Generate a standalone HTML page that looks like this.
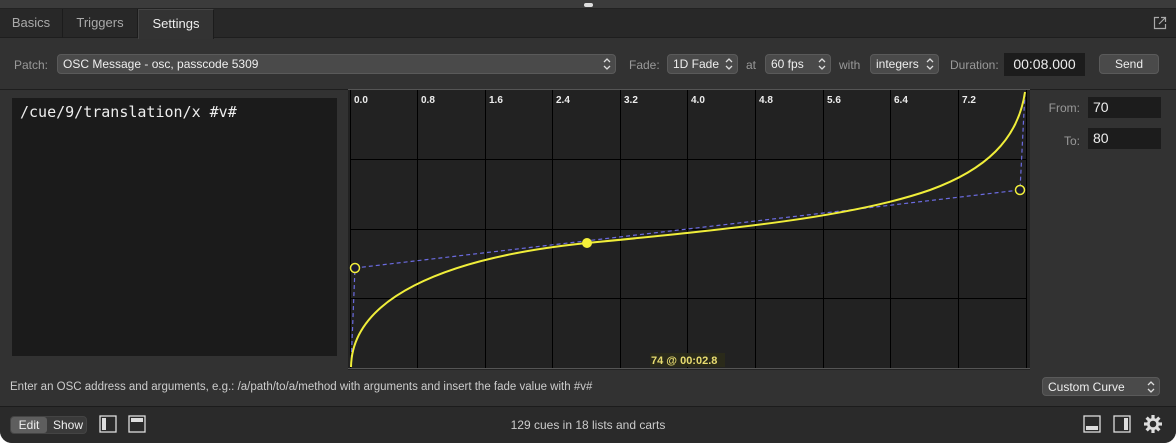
<!DOCTYPE html>
<html><head><style>
*{margin:0;padding:0;box-sizing:border-box}
body{width:1176px;height:443px;background:#fff;font-family:"Liberation Sans",sans-serif;font-size:12px;color:#ddd;position:relative;overflow:hidden}
.win{position:absolute;left:0;top:0;width:1176px;height:443px;background:#323232;border-radius:0 0 12px 12px;overflow:hidden}
.abs{position:absolute}
.top{left:0;top:0;width:1176px;height:9px;background:#3b3b3b;border-bottom:1px solid #222}
.tabbar{left:0;top:9px;width:1176px;height:29px;background:#282828;border-bottom:1px solid #1e1e1e}
.tab{position:absolute;top:0;height:29px;line-height:28px;text-align:center;font-size:13px;color:#aaa;border-right:1px solid #1c1c1c}
.lbl{color:#999;font-size:12px}
.pop{position:absolute;height:20px;background:#4a4a4a;border:1px solid #5a5a5a;border-radius:4px;color:#eee;font-size:12px;line-height:18px;padding-left:5px}
.pop svg{position:absolute;right:4px;top:2px}
.field{position:absolute;background:#1c1c1c;color:#eee;font-size:14px}
.btm{left:0;top:406px;width:1176px;height:37px;background:#2a2a2a;border-top:1px solid #1c1c1c}
</style></head><body><div class="win">
<div class="abs top"></div>
<div class="abs" style="left:584px;top:3px;width:9px;height:4px;border-radius:2px;background:#ddd"></div>
<div class="abs tabbar">
<div class="tab" style="left:0;width:63px">Basics</div>
<div class="tab" style="left:63px;width:75px">Triggers</div>
<div class="tab" style="left:138px;width:76px;background:#333;color:#eee;border-left:1px solid #444;border-top:1px solid #444;height:30px">Settings</div>
<svg class="abs" style="left:1153px;top:7px" width="14" height="14" viewBox="0 0 14 14" fill="none" stroke="#aaa" stroke-width="1.2"><path d="M6 1.5H1.5V12.5H12.5V8M8 1.5H12.5V6M12.5 1.5L6 8"/></svg>
</div>
<div class="abs lbl" style="left:14px;top:58px">Patch:</div>
<div class="pop" style="left:57px;top:54px;width:559px">OSC Message - osc, passcode 5309<svg width="8" height="14"><path d="M1 5L4 2L7 5M1 9L4 12L7 9" fill="none" stroke="#ddd" stroke-width="1.3"/></svg></div>
<div class="abs lbl" style="left:629px;top:58px">Fade:</div>
<div class="pop" style="left:667px;top:54px;width:71px">1D Fade<svg width="8" height="14"><path d="M1 5L4 2L7 5M1 9L4 12L7 9" fill="none" stroke="#ddd" stroke-width="1.3"/></svg></div>
<div class="abs lbl" style="left:746px;top:58px">at</div>
<div class="pop" style="left:765px;top:54px;width:66px">60 fps<svg width="8" height="14"><path d="M1 5L4 2L7 5M1 9L4 12L7 9" fill="none" stroke="#ddd" stroke-width="1.3"/></svg></div>
<div class="abs lbl" style="left:839px;top:58px">with</div>
<div class="pop" style="left:870px;top:54px;width:69px">integers<svg width="8" height="14"><path d="M1 5L4 2L7 5M1 9L4 12L7 9" fill="none" stroke="#ddd" stroke-width="1.3"/></svg></div>
<div class="abs lbl" style="left:950px;top:58px">Duration:</div>
<div class="field" style="left:1004px;top:53px;width:81px;height:23px;line-height:23px;text-align:center">00:08.000</div>
<div class="pop" style="left:1099px;top:54px;width:60px;text-align:center;padding:0">Send</div>
<div class="abs" style="left:0;top:89px;width:1176px;height:1px;background:#1e1e1e"></div>
<div class="field" style="left:12px;top:98px;width:325px;height:258px;background:#1b1b1b;font-family:'DejaVu Sans Mono','Liberation Mono',monospace;font-size:15px;padding:5px 8px">/cue/9/translation/x #v#</div>
<svg class="abs" style="left:348px;top:89px" width="682" height="281" viewBox="348 89 682 281">
<rect x="348" y="89" width="682" height="281" fill="#222"/>
<g stroke="#000" stroke-width="1">
<path d="M350.5 89V368M417.5 89V368M485.5 89V368M552.5 89V368M620.5 89V368M687.5 89V368M755.5 89V368M823.5 89V368M890.5 89V368M958.5 89V368M1026.5 89V368"/>
<path d="M350 159.5H1027M350 229.5H1027M350 298.5H1027"/>
</g>
<path d="M348 89.5H1030M348 368.5H1030" stroke="#555"/>
<g font-family="Liberation Sans" font-size="10" font-weight="bold" fill="#eee">
<text x="354" y="103">0.0</text><text x="421" y="103">0.8</text><text x="489" y="103">1.6</text><text x="556" y="103">2.4</text><text x="624" y="103">3.2</text><text x="691" y="103">4.0</text><text x="759" y="103">4.8</text><text x="827" y="103">5.6</text><text x="894" y="103">6.4</text><text x="962" y="103">7.2</text>
</g>
<path d="M351 366L355 268L1020 190L1025 92" fill="none" stroke="#6b6be0" stroke-width="1.2" stroke-dasharray="4 3"/>
<path d="M351 367C352 300 440 258 587 243C720 230 850 218 930 190C985 170 1018 140 1025 92" fill="none" stroke="#f0ee3a" stroke-width="2"/>
<circle cx="355" cy="268" r="4.5" fill="#1a1a30" stroke="#f0ee3a" stroke-width="1.5"/>
<circle cx="1020" cy="190" r="4.5" fill="#1a1a30" stroke="#f0ee3a" stroke-width="1.5"/>
<circle cx="587" cy="243" r="5" fill="#f5f03a"/>
<rect x="650" y="353" width="75" height="14" fill="#2a2a1a"/>
<text x="651" y="364" font-family="Liberation Sans" font-size="11" font-weight="bold" fill="#e8dc70">74 @ 00:02.8</text>
</svg>
<div class="abs lbl" style="left:1046px;top:101px;width:34px;text-align:right;font-size:12px">From:</div>
<div class="field" style="left:1088px;top:97px;width:73px;height:21px;line-height:21px;padding-left:5px">70</div>
<div class="abs lbl" style="left:1046px;top:134px;width:34px;text-align:right;font-size:12px">To:</div>
<div class="field" style="left:1088px;top:128px;width:73px;height:21px;line-height:21px;padding-left:5px">80</div>
<div class="abs" style="left:10px;top:381px;font-size:11.5px;color:#ccc">Enter an OSC address and arguments, e.g.: /a/path/to/a/method with arguments and insert the fade value with #v#</div>
<div class="pop" style="left:1042px;top:377px;width:118px;height:19px">Custom Curve<svg width="8" height="14"><path d="M1 5L4 2L7 5M1 9L4 12L7 9" fill="none" stroke="#ddd" stroke-width="1.3"/></svg></div>
<div class="abs btm"></div>
<div class="abs" style="left:10px;top:416px;width:77px;height:18px;border-radius:4px;background:#3a3a3a;border:1px solid #444"></div>
<div class="abs" style="left:11px;top:417px;width:36px;height:16px;border-radius:3px;background:#5e5e5e;color:#eee;font-size:12px;line-height:16px;text-align:center">Edit</div>
<div class="abs" style="left:50px;top:417px;width:36px;font-size:12px;line-height:16px;text-align:center;color:#eee">Show</div>
<svg class="abs" style="left:99px;top:415px" width="20" height="20"><rect x="1" y="1" width="16" height="16" fill="none" stroke="#ddd" stroke-width="1.3"/><rect x="3" y="3" width="4" height="12" fill="#ddd"/></svg>
<svg class="abs" style="left:128px;top:415px" width="20" height="20"><rect x="1" y="1" width="16" height="16" fill="none" stroke="#ddd" stroke-width="1.3"/><rect x="3" y="3" width="12" height="4" fill="#ddd"/></svg>
<div class="abs" style="left:0;top:418px;width:1176px;text-align:center;font-size:12px;color:#ccc">129 cues in 18 lists and carts</div>
<svg class="abs" style="left:1083px;top:415px" width="20" height="20"><rect x="1" y="1" width="16" height="16" fill="none" stroke="#ddd" stroke-width="1.3"/><rect x="3" y="11" width="12" height="4" fill="#ddd"/></svg>
<svg class="abs" style="left:1113px;top:415px" width="20" height="20"><rect x="1" y="1" width="16" height="16" fill="none" stroke="#ddd" stroke-width="1.3"/><rect x="11" y="3" width="4" height="12" fill="#ddd"/></svg>
<svg class="abs" style="left:1143px;top:414px" width="20" height="20" viewBox="-10 -10 20 20"><g fill="#ddd"><circle r="6"/><g id="t"><rect x="-1.6" y="-9" width="3.2" height="4"/></g><use href="#t" transform="rotate(45)"/><use href="#t" transform="rotate(90)"/><use href="#t" transform="rotate(135)"/><use href="#t" transform="rotate(180)"/><use href="#t" transform="rotate(225)"/><use href="#t" transform="rotate(270)"/><use href="#t" transform="rotate(315)"/></g><circle r="3.3" fill="#2a2a2a"/></svg>
</div></body></html>
